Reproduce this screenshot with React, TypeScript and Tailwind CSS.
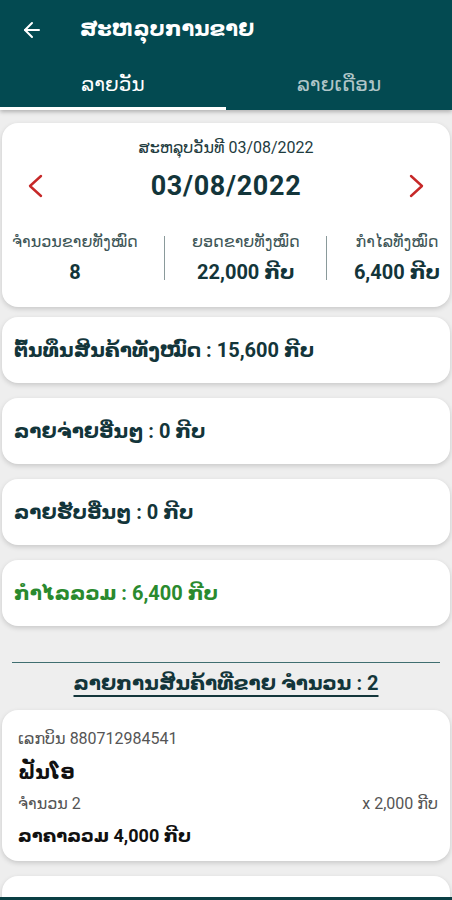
import { ArrowLeft } from "lucide-react";

const font = { fontFamily: "Roboto, 'DejaVu Sans', 'Noto Sans', sans-serif" };

const stats = [
  { label: "ຈຳນວນຂາຍທັງໝົດ", value: "8" },
  { label: "ຍອດຂາຍທັງໝົດ", value: "22,000 ກີບ" },
  { label: "ກຳໄລທັງໝົດ", value: "6,400 ກີບ" },
];

const totals = [
  { text: "ຕົ້ນທຶນສິນຄ້າທັງໝົດ : 15,600 ກີບ", green: false },
  { text: "ລາຍຈ່າຍອື່ນໆ : 0 ກີບ", green: false },
  { text: "ລາຍຮັບອື່ນໆ : 0 ກີບ", green: false },
  { text: "ກຳໄລລວມ : 6,400 ກີບ", green: true },
];

const cardClass = "rounded-2xl bg-white shadow-[0_2px_5px_rgba(0,0,0,0.16)]";

function Chevron({ dir }: { dir: "left" | "right" }) {
  return (
    <svg width="16" height="24" viewBox="0 0 16 24" fill="none" className="text-[#c62828]">
      <polyline
        points={dir === "left" ? "14,2 3,12 14,22" : "2,2 13,12 2,22"}
        stroke="currentColor"
        strokeWidth="2.4"
        strokeLinecap="round"
        strokeLinejoin="round"
      />
    </svg>
  );
}

export default function App() {
  return (
    <div className="flex h-[900px] w-[452px] flex-col overflow-hidden bg-[#eeeeee]" style={font}>
      <header className="bg-[#034a51] text-white shadow-[0_2px_4px_rgba(0,0,0,0.25)]">
        <div className="flex h-[60px] items-center px-5">
          <ArrowLeft className="h-6 w-6" strokeWidth={2} />
          <h1 className="ml-[36px] text-[21px] font-bold">ສະຫລຸບການຂາຍ</h1>
        </div>
        <div className="flex h-[50px]">
          <div className="flex flex-1 flex-col">
            <div className="flex flex-1 items-center justify-center text-[20px]">ລາຍວັນ</div>
            <div className="h-[3px] bg-white" />
          </div>
          <div className="flex flex-1 items-center justify-center pb-[3px] text-[20px] text-white/70">
            ລາຍເດືອນ
          </div>
        </div>
      </header>

      <main className="flex flex-1 flex-col gap-[15px] overflow-hidden px-[2px] pt-[13px]">
        <section className={`${cardClass} -mb-[5px] shrink-0 px-[10px] pb-[23px] pt-[15px]`}>
          <p className="text-center text-[16px] leading-[20px] text-[#1e3b3e]">ສະຫລຸບວັນທີ 03/08/2022</p>
          <div className="mt-[12px] flex items-center justify-between px-[15px]">
            <Chevron dir="left" />
            <span className="text-[27px] font-bold leading-[32px] tracking-wide text-[#13353a]">
              03/08/2022
            </span>
            <Chevron dir="right" />
          </div>
          <div className="mt-[30px] flex items-stretch justify-between">
            {stats.map((s, i) => (
              <div key={s.label} className="contents">
                {i > 0 && <div className="my-1 w-px bg-[#8a9a9b]" />}
                <div className="flex flex-col items-center">
                  <span className="text-[16px] leading-[20px] text-[#3d5556]">{s.label}</span>
                  <span className="mt-[8px] text-[20px] font-bold leading-[24px] text-[#13353a]">
                    {s.value}
                  </span>
                </div>
              </div>
            ))}
          </div>
        </section>

        {totals.map((t) => (
          <section key={t.text} className={`${cardClass} flex h-[66px] shrink-0 items-center px-3`}>
            <span className={`text-[20px] font-bold ${t.green ? "text-[#2a8a2e]" : "text-[#13353a]"}`}>
              {t.text}
            </span>
          </section>
        ))}

        <div className="mx-[10px] mt-[21px] shrink-0 border-t border-[#3f6e70]" />
        <h2 className="-mt-[9px] shrink-0 text-center text-[20px] font-bold leading-[28px] text-[#13353a] underline underline-offset-[5px]">
          ລາຍການສິນຄ້າທີ່ຂາຍ ຈຳນວນ : 2
        </h2>

        <section className={`${cardClass} -mt-[2px] flex shrink-0 flex-col pb-[13px] pl-4 pr-3 pt-[18px]`}>
          <span className="text-[16px] leading-[22px] text-[#555]">ເລກບິນ 880712984541</span>
          <span className="mt-[8px] text-[20px] font-bold leading-[28px] text-[#111]">ຟັນໂອ</span>
          <div className="mt-[7px] flex items-center justify-between text-[16px] leading-[22px] text-[#555]">
            <span>ຈຳນວນ 2</span>
            <span>x 2,000 ກີບ</span>
          </div>
          <span className="mt-[9px] text-[18px] font-bold leading-[24px] text-[#111]">ລາຄາລວມ 4,000 ກີບ</span>
        </section>

        <section className={`${cardClass} h-[60px] shrink-0`} />
      </main>
      <div className="h-[3px] shrink-0 bg-[#0b3f44]" />
    </div>
  );
}
